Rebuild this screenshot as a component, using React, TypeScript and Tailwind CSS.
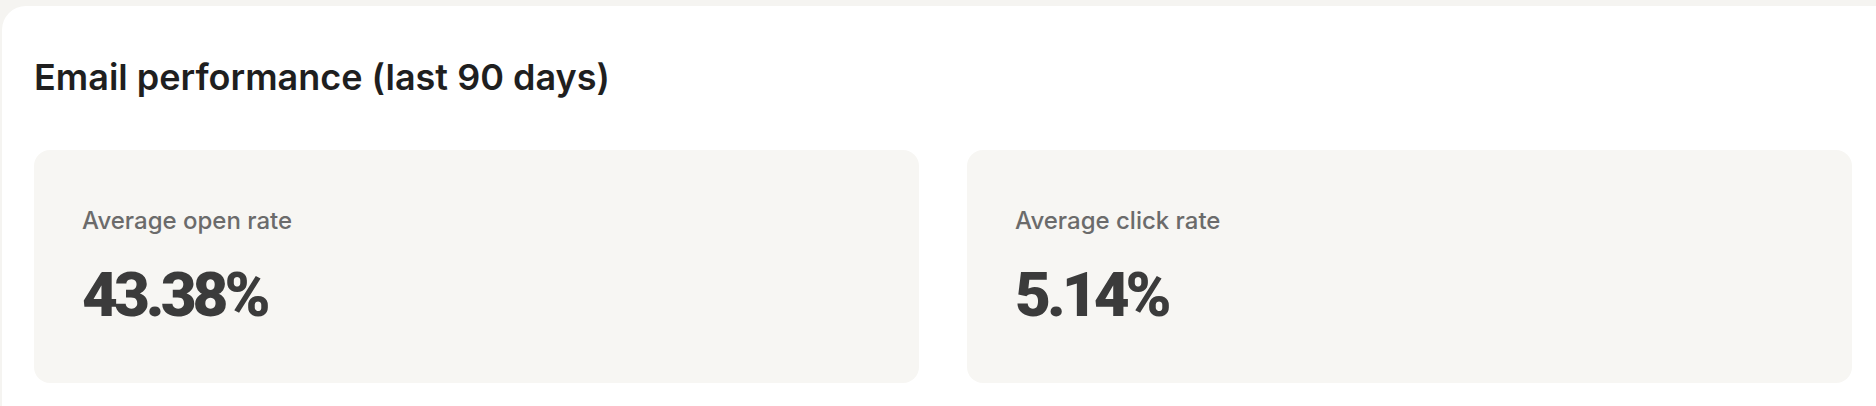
const stats = [
  { label: "Average open rate", value: "43.38%" },
  { label: "Average click rate", value: "5.14%" },
];

const StatCard = ({ label, value }: { label: string; value: string }) => {
  return (
    <div className="rounded-2xl bg-[#f7f6f3] pl-12 pt-[57px] pb-[57px]">
      <p className="text-[24px] leading-[28px] font-medium text-[#6b6b6b] font-['Inter',sans-serif]">
        {label}
      </p>
      <p className="mt-[29px] text-[62px] leading-[62px] font-black tracking-[-4px] text-[#3b3b3b] font-['Roboto',sans-serif]">
        {value}
      </p>
    </div>
  );
};

export default function App() {
  return (
    <div className="w-[1876px] h-[406px] overflow-hidden bg-[#f5f4f1] pt-[6px] pl-[2px]">
      <div className="h-full bg-white rounded-tl-[24px] pl-8 pr-6 pt-[51px] font-['Inter',sans-serif]">
        <h1 className="text-[36px] leading-[40px] font-semibold text-[#1f1f1f]">
          Email performance (last 90 days)
        </h1>
        <div className="mt-[53px] grid grid-cols-2 gap-12">
          {stats.map((s) => (
            <StatCard key={s.label} label={s.label} value={s.value} />
          ))}
        </div>
      </div>
    </div>
  );
}
